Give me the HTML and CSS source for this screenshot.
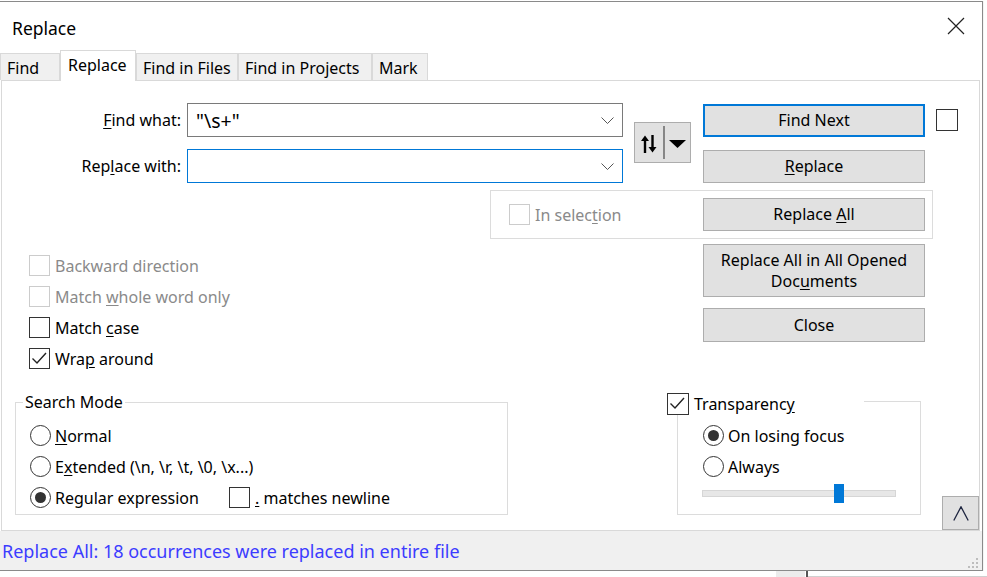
FILE: index.html
```html
<!DOCTYPE html>
<html lang="en">
<head>
    <meta charset="UTF-8">
    <title>Replace</title>
    <link rel="stylesheet" href="styles.css">
</head>
<body>
<div class="screen">
    <div class="top-row">
        <div class="dialog">
            <div class="titlebar">
                <div class="title">Replace</div>
                <div class="close-x">
                    <svg width="18" height="18" viewBox="0 0 18 18"><path d="M1 1 L17 17 M17 1 L1 17" stroke="#222" stroke-width="1.2" fill="none"/></svg>
                </div>
            </div>

            <div class="tabs">
                <div class="tab" style="width:60px">Find</div>
                <div class="tab active" style="width:76px">Replace</div>
                <div class="tab" style="width:102px">Find in Files</div>
                <div class="tab" style="width:134px">Find in Projects</div>
                <div class="tab" style="width:56px">Mark</div>
            </div>

            <div class="panel">
                <div class="find-grid">
                    <div class="label"><u>F</u>ind what:</div>
                    <div class="combo">
                        <span class="combo-text">"\s+"</span>
                        <svg class="chev" width="13" height="7" viewBox="0 0 13 7"><path d="M0.5 0.5 L6.5 6.5 L12.5 0.5" stroke="#555" stroke-width="1" fill="none"/></svg>
                    </div>
                    <div class="swap">
                        <svg width="57" height="41" viewBox="0 0 57 41">
                            <path d="M11 31 V17" stroke="#000" stroke-width="2.4"/>
                            <path d="M7 19 L11 13.5 L15 19 Z" fill="#000"/>
                            <path d="M18.5 13 V27" stroke="#000" stroke-width="2.4"/>
                            <path d="M14.5 25 L18.5 30.5 L22.5 25 Z" fill="#000"/>
                            <path d="M30 4 V37" stroke="#707070" stroke-width="1.6"/>
                            <path d="M35 18 L52 18 L43.5 26 Z" fill="#000"/>
                        </svg>
                    </div>
                    <div class="btn default find-next"><span>Find Next</span></div>
                    <span class="cb side-cb"></span>

                    <div class="label">Rep<u>l</u>ace with:</div>
                    <div class="combo focused">
                        <span class="combo-text"></span>
                        <svg class="chev" width="13" height="7" viewBox="0 0 13 7"><path d="M0.5 0.5 L6.5 6.5 L12.5 0.5" stroke="#555" stroke-width="1" fill="none"/></svg>
                    </div>
                    <div class="btn replace-btn"><span><u>R</u>eplace</span></div>
                </div>

                <div class="selection-box">
                    <span class="cb disabled"></span>
                    <span class="opt-text muted">In selec<u>t</u>ion</span>
                    <div class="btn replace-all"><span>Replace <u>A</u>ll</span></div>
                </div>

                <div class="middle">
                    <div class="options">
                        <div class="opt"><span class="cb disabled"></span><span class="opt-text muted">Backward direction</span></div>
                        <div class="opt"><span class="cb disabled"></span><span class="opt-text muted">Match <u>w</u>hole word only</span></div>
                        <div class="opt"><span class="cb"></span><span class="opt-text">Match <u>c</u>ase</span></div>
                        <div class="opt"><span class="cb"><svg width="21" height="21" viewBox="0 0 21 21"><path d="M3.5 10.5 L8 15 L17 5" stroke="#222" stroke-width="1.4" fill="none"/></svg></span><span class="opt-text">Wra<u>p</u> around</span></div>
                    </div>
                    <div class="btn-stack">
                        <div class="btn tall"><span>Replace All in All Opened<br>Doc<u>u</u>ments</span></div>
                        <div class="btn"><span>Close</span></div>
                    </div>
                </div>

                <div class="bottom">
                    <div class="group search-mode">
                        <div class="legend">Search Mode</div>
                        <div class="radio-list">
                            <div class="opt"><span class="rb"></span><span class="opt-text"><u>N</u>ormal</span></div>
                            <div class="opt"><span class="rb"></span><span class="opt-text">E<u>x</u>tended (\n, \r, \t, \0, \x...)</span></div>
                            <div class="opt">
                                <div class="opt regex"><span class="rb on"></span><span class="opt-text">Re<u>g</u>ular expression</span></div>
                                <span class="cb"></span><span class="opt-text"><u>.</u> matches newline</span>
                            </div>
                        </div>
                    </div>

                    <div class="group transparency">
                        <div class="legend check-legend">
                            <span class="cb"><svg width="21" height="21" viewBox="0 0 21 21"><path d="M3.5 10.5 L8 15 L17 5" stroke="#222" stroke-width="1.4" fill="none"/></svg></span>
                            <span class="opt-text">Transparenc<u>y</u></span>
                        </div>
                        <div class="radio-list">
                            <div class="opt"><span class="rb on"></span><span class="opt-text">On losing focus</span></div>
                            <div class="opt"><span class="rb"></span><span class="opt-text">Always</span></div>
                        </div>
                        <div class="slider">
                            <div class="track"></div>
                            <div class="thumb" style="left: 68%"></div>
                        </div>
                    </div>

                    <div class="btn collapse">
                        <svg width="16" height="15" viewBox="0 0 16 15"><path d="M0.8 14.5 L8 0.8 L15.2 14.5" stroke="#1e2540" stroke-width="1.3" fill="none"/></svg>
                    </div>
                </div>
            </div>

            <div class="status">
                <span class="status-text">Replace All: 18 occurrences were replaced in entire file</span>
                <svg class="grip" width="12" height="12" viewBox="0 0 12 12">
                    <rect x="9" y="1" width="2" height="2"/><rect x="5" y="5" width="2" height="2"/><rect x="9" y="5" width="2" height="2"/>
                    <rect x="1" y="9" width="2" height="2"/><rect x="5" y="9" width="2" height="2"/><rect x="9" y="9" width="2" height="2"/>
                </svg>
            </div>
        </div>

        <div class="behind-edge"></div>
    </div>

    <div class="behind-bottom">
        <div class="bb-space"></div>
        <div class="bb-block"></div>
        <div class="bb-line"></div>
        <div class="bb-rest"></div>
    </div>
</div>
</body>
</html>
```

FILE: styles.css
```css
* {
    box-sizing: border-box;
}
body {
    margin: 0;
    background-color: #fff;
    font-family: "Noto Sans", "Segoe UI", sans-serif;
    font-size: 16px;
    color: #000;
    overflow: hidden;
}
u {
    text-underline-offset: 2px;
}
.screen {
    width: 987px;
    height: 577px;
    overflow: hidden;
}
.top-row {
    display: flex;
    padding-top: 1px;
}
.dialog {
    width: 983px;
    height: 570px;
    flex-shrink: 0;
    border-top: 1px solid #8a8a8a;
    border-right: 1px solid #8a8a8a;
    border-bottom: 1px solid #8a8a8a;
    background-color: #fff;
    display: flex;
    flex-direction: column;
}

/* title bar */
.titlebar {
    height: 48px;
    display: flex;
    align-items: center;
    padding-left: 12px;
}
.title {
    flex: 1;
    font-size: 17.5px;
    padding-top: 3px;
}
.close-x {
    width: 46px;
    margin-right: 3px;
    display: flex;
    justify-content: center;
}

/* tabs */
.tabs {
    display: flex;
    align-items: flex-end;
    height: 30px;
}
.tab {
    height: 27px;
    line-height: 28px;
    padding-left: 6px;
    white-space: nowrap;
    border: 1px solid #d9d9d9;
    border-bottom: none;
    background-color: #f0f0f0;
}
.tab.active {
    height: 31px;
    line-height: 29px;
    padding-left: 7px;
    margin-bottom: -1px;
    background-color: #fff;
    position: relative;
    z-index: 1;
}

/* main panel */
.panel {
    width: 979px;
    height: 451px;
    margin-left: 1px;
    border: 1px solid #d9d9d9;
    padding-top: 22px;
    display: flex;
    flex-direction: column;
}
.find-grid {
    display: grid;
    grid-template-columns: 185px 447px 69px 233px 22px;
    grid-template-rows: 34px 34px;
    row-gap: 12px;
}
.label {
    justify-self: end;
    align-self: center;
    padding-right: 6px;
    white-space: nowrap;
}
.combo {
    width: 436px;
    height: 34px;
    border: 1px solid #7a7a7a;
    display: flex;
    align-items: center;
    padding-left: 8px;
    padding-right: 8px;
}
.combo.focused {
    border-color: #0078d7;
}
.combo-text {
    flex: 1;
    font-size: 19.5px;
}
.swap {
    grid-column: 3;
    grid-row: 1 / 3;
    align-self: center;
    width: 57px;
    height: 41px;
    margin-top: -1px;
    background-color: #e1e1e1;
    border: 1px solid #adadad;
}
.swap svg {
    display: block;
    margin: -1px;
}
.btn {
    background-color: #e1e1e1;
    border: 1px solid #adadad;
    display: flex;
    align-items: center;
    justify-content: center;
    text-align: center;
    line-height: 21px;
    height: 34px;
    width: 222px;
}
.btn.default {
    border: 2px solid #0078d7;
}
.find-next,
.replace-btn {
    margin-top: 1px;
    height: 33px;
}
.cb {
    width: 21px;
    height: 21px;
    flex-shrink: 0;
    border: 1px solid #333;
    background-color: #fff;
}
.cb svg {
    display: block;
    margin: -1px;
}
.cb.disabled {
    border-color: #cccccc;
}
.side-cb {
    width: 22px;
    height: 22px;
    margin-top: 6px;
}
.opt-text {
    white-space: nowrap;
    margin-left: 5px;
}
.muted {
    color: #8a8a8a;
}

/* in selection group */
.selection-box {
    margin-top: 7px;
    margin-left: 488px;
    width: 443px;
    height: 49px;
    border: 1px solid #dcdcdc;
    display: flex;
    align-items: center;
    padding-left: 18px;
}
.replace-all {
    margin-left: auto;
    margin-right: 7px;
    height: 33px;
}

/* middle: options + buttons */
.middle {
    margin-top: 5px;
    display: grid;
    grid-template-columns: 701px 222px;
    height: 130px;
}
.options {
    padding-left: 27px;
    padding-top: 6px;
}
.opt {
    height: 31px;
    display: flex;
    align-items: center;
}
.btn-stack {
    display: flex;
    flex-direction: column;
    gap: 11px;
}
.btn.tall {
    height: 53px;
}

/* bottom: search mode + transparency */
.bottom {
    margin-top: 27px;
    height: 129px;
    display: flex;
    align-items: flex-start;
}
.group {
    border: 1px solid #dcdcdc;
    display: flex;
    flex-direction: column;
    align-items: flex-start;
}
.legend {
    background-color: #fff;
    height: 20px;
    line-height: 20px;
    padding: 0 2px;
}
.search-mode {
    margin-left: 13px;
    margin-top: 1px;
    width: 493px;
    height: 113px;
}
.search-mode .legend {
    margin-top: -11px;
    margin-left: 7px;
}
.search-mode .radio-list {
    margin-top: 8px;
    padding-left: 14px;
}
.regex {
    width: 199px;
}
.rb {
    width: 21px;
    height: 21px;
    flex-shrink: 0;
    border: 1px solid #333;
    border-radius: 50%;
    display: flex;
    align-items: center;
    justify-content: center;
}
.rb.on::after {
    content: "";
    width: 11px;
    height: 11px;
    border-radius: 50%;
    background-color: #333;
}
.rb + .opt-text {
    margin-left: 4px;
}
.transparency {
    margin-left: 169px;
    width: 244px;
    height: 114px;
}
.check-legend {
    margin-top: -9px;
    margin-left: -11px;
    width: 197px;
    height: 22px;
    padding: 0;
    display: flex;
    align-items: center;
}
.check-legend .cb {
    width: 22px;
    height: 22px;
}
.check-legend .opt-text {
    margin-left: 5px;
}
.transparency .radio-list {
    margin-top: 5px;
    padding-left: 25px;
}
.slider {
    position: relative;
    margin-top: 2px;
    margin-left: 24px;
    width: 194px;
    height: 19px;
}
.track {
    margin-top: 6px;
    height: 7px;
    background-color: #e7e7e7;
    border: 1px solid #d6d6d6;
}
.thumb {
    position: absolute;
    top: 0;
    width: 10px;
    height: 19px;
    background-color: #0078d7;
}
.btn.collapse {
    align-self: flex-end;
    margin-left: 21px;
    width: 37px;
    height: 34px;
}

/* status bar */
.status {
    height: 39px;
    background-color: #f0f0f0;
    display: flex;
    align-items: center;
    padding-left: 2px;
}
.status-text {
    flex: 1;
    font-size: 18px;
    color: #3c3cff;
    white-space: nowrap;
}
.grip {
    align-self: flex-end;
    margin-right: 3px;
    margin-bottom: 1px;
    fill: #bdbdbd;
}

/* bits of the window behind */
.behind-edge {
    width: 4px;
    border-left: 1px solid #f4f4f4;
}
.behind-bottom {
    display: flex;
    height: 6px;
}
.bb-space {
    width: 776px;
}
.bb-block {
    width: 29px;
    background-color: #ececec;
}
.bb-line {
    width: 2px;
    margin-left: 1px;
    background-color: #555;
}
.bb-rest {
    flex: 1;
    border-bottom: 1px solid #d0d0d0;
}
```
